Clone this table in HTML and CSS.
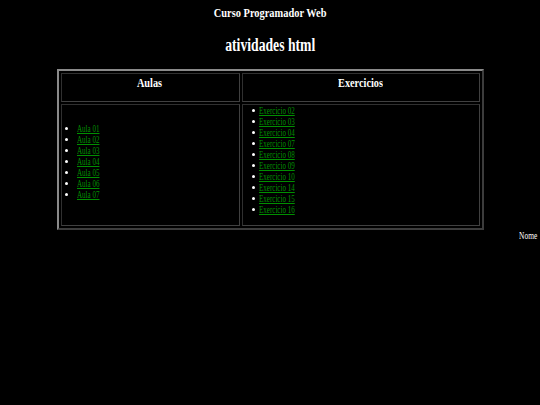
FILE: index.html
```html
<!DOCTYPE html>
<html lang="pt">
<head>
<meta charset="utf-8">
<title>atividades html</title>
<link rel="stylesheet" href="styles.css">
</head>
<body>
<h3 class="topo"><span class="sx">Curso Programador Web</span></h3>
<h1 class="titulo"><span class="sx">atividades html</span></h1>
<table class="tabela">
  <tr>
    <th class="col-aulas"><span class="sx">Aulas</span></th>
    <th><span class="sx">Exercicios</span></th>
  </tr>
  <tr>
    <td>
      <ul class="lista lista-aulas">
        <li><a class="sx" href="#">Aula 01</a></li>
        <li><a class="sx" href="#">Aula 02</a></li>
        <li><a class="sx" href="#">Aula 03</a></li>
        <li><a class="sx" href="#">Aula 04</a></li>
        <li><a class="sx" href="#">Aula 05</a></li>
        <li><a class="sx" href="#">Aula 06</a></li>
        <li><a class="sx" href="#">Aula 07</a></li>
      </ul>
    </td>
    <td>
      <ul class="lista lista-ex">
        <li><a class="sx" href="#">Exercicio 02</a></li>
        <li><a class="sx" href="#">Exercicio 03</a></li>
        <li><a class="sx" href="#">Exercicio 04</a></li>
        <li><a class="sx" href="#">Exercicio 07</a></li>
        <li><a class="sx" href="#">Exercicio 08</a></li>
        <li><a class="sx" href="#">Exercicio 09</a></li>
        <li><a class="sx" href="#">Exercicio 10</a></li>
        <li><a class="sx" href="#">Exercicio 14</a></li>
        <li><a class="sx" href="#">Exercicio 15</a></li>
        <li><a class="sx" href="#">Exercicio 16</a></li>
      </ul>
    </td>
  </tr>
</table>
<p class="nome"><span class="sx">Nome</span></p>
</body>
</html>
```
FILE: styles.css
```css
html, body {
  background: #000;
}
body {
  margin: 0;
  color: #fff;
  font-family: "Liberation Serif", "Times New Roman", serif;
}
.sx {
  display: inline-block;
  transform: scaleX(0.78);
  transform-origin: center;
}
.topo {
  margin: 0;
  padding-top: 5px;
  text-align: center;
  font-size: 13.5px;
  line-height: 16px;
  font-weight: bold;
}
.topo .sx {
  transform: scaleX(0.77);
}
.titulo {
  margin: 0;
  padding-top: 13px;
  text-align: center;
  font-size: 18px;
  line-height: 22px;
  font-weight: bold;
}
.titulo .sx {
  transform: scaleX(0.76);
}
.tabela {
  width: 427px;
  margin: 13px auto 0;
  border: 2px solid;
  border-color: #8a8a8a #3c3c3c #3c3c3c #8a8a8a;
  border-spacing: 2px 2px;
}
.tabela th {
  height: 22px;
  padding: 1px 1px 4px;
  border: 1px solid;
  border-color: #303030 #404040 #404040 #303030;
  font-size: 13.5px;
  line-height: 16px;
  font-weight: bold;
  vertical-align: top;
}
.tabela th .sx {
  transform: scaleX(0.76);
}
.tabela td {
  padding: 1px;
  border: 1px solid;
  border-color: #303030 #404040 #404040 #303030;
  vertical-align: middle;
  font-size: 10.5px;
  line-height: 11px;
}
.col-aulas {
  width: 175px;
}
.lista {
  margin: 0 0 8px;
  padding: 0;
  list-style: none;
}
.lista li {
  display: flex;
  align-items: center;
  height: 11px;
}
.lista li::before {
  content: "";
  flex: none;
  width: 3px;
  height: 3px;
  border-radius: 50%;
  background: #fff;
}
.lista-aulas {
  padding-left: 2px;
}
.lista-aulas li::before {
  margin-right: 9px;
}
.lista-ex {
  margin: -1px 0 9px;
  padding-left: 8px;
}
.lista-ex li::before {
  margin-right: 4px;
}
.lista a {
  color: #009000;
  transform: scaleX(0.67);
  transform-origin: left center;
}
.nome {
  margin: 0;
  padding-right: 3px;
  text-align: right;
  font-size: 9.5px;
  line-height: 12px;
}
.nome .sx {
  transform-origin: right center;
}
```
